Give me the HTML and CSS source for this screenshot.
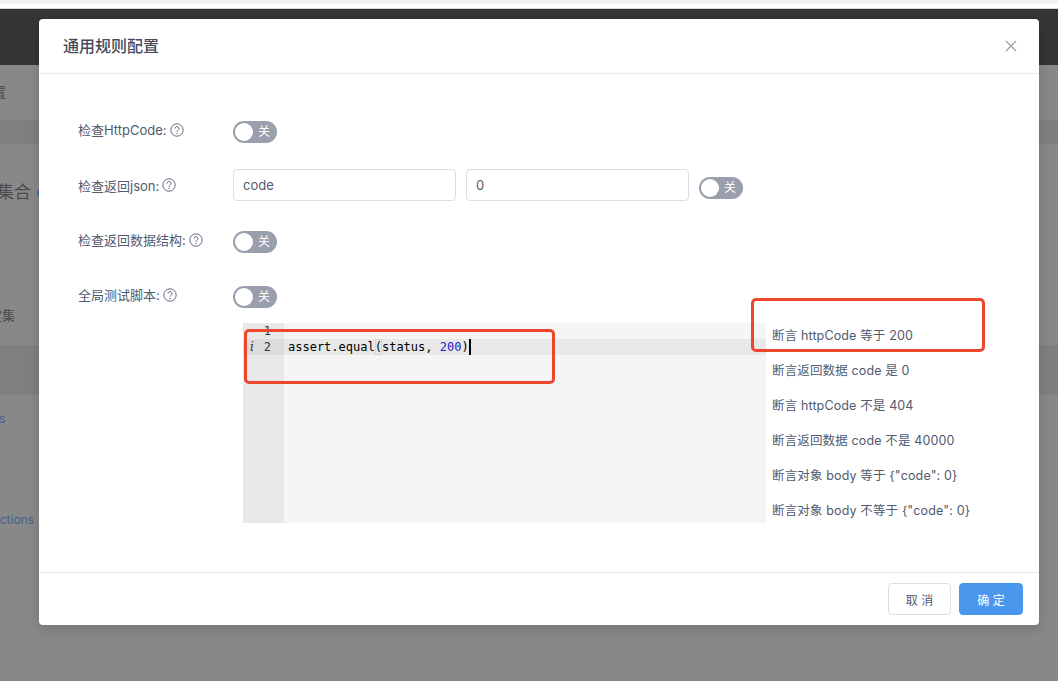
FILE: index.html
```html
<!DOCTYPE html>
<html lang="zh">
<head>
<meta charset="utf-8">
<title>通用规则配置</title>
<link rel="stylesheet" href="styles.css">
</head>
<body>
<div class="page">
  <div class="strip"></div>
  <div class="gap-white"></div>
  <div class="topbar"></div>
  <div class="sec sec-a"><span class="clip-a">设置</span></div>
  <div class="band band-a"></div>
  <div class="sec sec-b"><span class="clip-b">集合</span><i class="dot"></i></div>
  <div class="sec sec-c"><span class="clip-c">定集</span></div>
  <div class="band band-b"></div>
  <div class="sec sec-d"><span class="clip-d">s</span></div>
  <div class="sec sec-e"><span class="clip-e">actions</span></div>
</div>

<div class="modal">
  <header class="modal-head">
    <h2 class="modal-title">通用规则配置</h2>
    <svg class="close" viewBox="0 0 12 12" width="12" height="12"><path d="M1 1l10 10M11 1L1 11" stroke="#999ba8" stroke-width="1.1" fill="none"/></svg>
  </header>

  <div class="modal-body">
    <div class="row row-1">
      <label class="label label-up">检查HttpCode:<svg class="help" viewBox="0 0 14 14" width="14" height="14"><circle cx="7" cy="7" r="6.2" fill="none" stroke="#515a6e" stroke-width=".9"/><path d="M5 5.6a2 2 0 1 1 3 1.7c-.7.4-1 .8-1 1.4" fill="none" stroke="#515a6e" stroke-width=".9"/><circle cx="7" cy="10.4" r=".6" fill="#515a6e"/></svg></label>
      <span class="switch"><i class="knob"></i><span class="switch-text">关</span></span>
    </div>
    <div class="row row-2">
      <label class="label">检查返回json:<svg class="help" viewBox="0 0 14 14" width="14" height="14"><circle cx="7" cy="7" r="6.2" fill="none" stroke="#515a6e" stroke-width=".9"/><path d="M5 5.6a2 2 0 1 1 3 1.7c-.7.4-1 .8-1 1.4" fill="none" stroke="#515a6e" stroke-width=".9"/><circle cx="7" cy="10.4" r=".6" fill="#515a6e"/></svg></label>
      <input class="input" value="code">
      <input class="input input-second" value="0">
      <span class="switch switch-low"><i class="knob"></i><span class="switch-text">关</span></span>
    </div>
    <div class="row row-3">
      <label class="label label-up">检查返回数据结构:<svg class="help" viewBox="0 0 14 14" width="14" height="14"><circle cx="7" cy="7" r="6.2" fill="none" stroke="#515a6e" stroke-width=".9"/><path d="M5 5.6a2 2 0 1 1 3 1.7c-.7.4-1 .8-1 1.4" fill="none" stroke="#515a6e" stroke-width=".9"/><circle cx="7" cy="10.4" r=".6" fill="#515a6e"/></svg></label>
      <span class="switch"><i class="knob"></i><span class="switch-text">关</span></span>
    </div>
    <div class="row row-4">
      <label class="label label-up">全局测试脚本:<svg class="help" viewBox="0 0 14 14" width="14" height="14"><circle cx="7" cy="7" r="6.2" fill="none" stroke="#515a6e" stroke-width=".9"/><path d="M5 5.6a2 2 0 1 1 3 1.7c-.7.4-1 .8-1 1.4" fill="none" stroke="#515a6e" stroke-width=".9"/><circle cx="7" cy="10.4" r=".6" fill="#515a6e"/></svg></label>
      <span class="switch"><i class="knob"></i><span class="switch-text">关</span></span>
    </div>
    <div class="script-row">
      <div class="editor">
        <div class="gutter">
          <div class="gline">1</div>
          <div class="gline gline-active"><i class="info">i</i>2</div>
        </div>
        <div class="code">
          <div class="cline"></div>
          <div class="cline cline-active">assert.equal<span class="paren">(</span>status, <span class="num">200</span>)<span class="cursor"></span></div>
        </div>
      </div>
      <ul class="snippets">
        <li>断言 httpCode 等于 200</li>
        <li>断言返回数据 code 是 0</li>
        <li>断言 httpCode 不是 404</li>
        <li>断言返回数据 code 不是 40000</li>
        <li>断言对象 body 等于 {"code": 0}</li>
        <li>断言对象 body 不等于 {"code": 0}</li>
      </ul>
    </div>
  </div>

  <footer class="modal-foot">
    <button class="btn">取 消</button>
    <button class="btn btn-primary">确 定</button>
  </footer>

  <div class="mark mark-code"></div>
  <div class="mark mark-list"></div>
</div>
</body>
</html>
```
FILE: styles.css
```css
* { box-sizing: border-box; }
html, body { margin: 0; padding: 0; height: 100%; overflow: hidden; }
body { font-family: Inter, "Noto Sans CJK SC", sans-serif; background: #888; }

.page { display: flex; flex-direction: column; height: 681px; overflow: hidden; background: #888; color: #4a4a4e; }
.strip { height: 4px; background: #f0f1f3; }
.gap-white { height: 5px; background: #fff; border-bottom: 1px solid #d8d8d8; }
.topbar { height: 56px; background: #343537; }
.sec { overflow: hidden; white-space: nowrap; }
.sec-a { height: 55px; font-size: 13px; line-height: 54px; }
.clip-a { margin-left: -20px; }
.band { background: #7f7f7f; }
.band-a { height: 24px; }
.sec-b { height: 96px; padding-top: 34px; font-size: 17px; line-height: 28px; }
.clip-b { margin-left: -3px; }
.dot { display: inline-block; width: 12px; height: 12px; margin-left: 6px; border-radius: 50%; background: #3f6ea8; vertical-align: -1px; }
.sec-c { height: 105px; padding-top: 57px; font-size: 13px; line-height: 36px; }
.clip-c { margin-left: -11px; }
.band-b { height: 50px; }
.sec-d { height: 100px; padding-top: 14px; font-size: 12px; line-height: 20px; color: #3f628f; }
.clip-d { margin-left: -1px; }
.sec-e { height: 100px; padding-top: 15px; font-size: 12px; line-height: 20px; color: #3f628f; }
.clip-e { margin-left: -7px; }

.modal { position: absolute; left: 39px; top: 19px; width: 1000px; height: 606px; display: flex; flex-direction: column; background: #fff; border-radius: 4px; box-shadow: 0 4px 12px rgba(0,0,0,.15); color: #515a6e; font-size: 13px; }
.modal-head { display: flex; align-items: center; justify-content: space-between; height: 55px; padding: 0 22px 2px 24px; border-bottom: 1px solid #e8eaec; }
.modal-title { margin: 0; font-size: 16px; font-weight: 500; color: #464c5b; }
.close { display: block; margin-top: 2px; }
.modal-body { flex: 1; padding: 42px 0 0 39px; }
.row { display: flex; height: 32px; align-items: flex-start; }
.row-2 { margin-top: 21px; }
.row-3 { margin-top: 25px; }
.row-4 { margin-top: 23px; }
.label { display: flex; align-items: center; width: 155px; height: 32px; flex: none; }
.label-up { height: 27px; }
.help { margin-left: 3px; flex: none; }
.switch { position: relative; display: inline-block; width: 44px; height: 22px; flex: none; margin-top: 5px; border-radius: 11px; background: #9a9fae; }
.switch-low { margin-top: 8px; margin-left: 10px; }
.knob { position: absolute; left: 2px; top: 2px; width: 18px; height: 18px; border-radius: 50%; background: #fff; }
.switch-text { position: absolute; left: 21px; top: 0; width: 20px; text-align: center; font-size: 12px; line-height: 22px; color: #fff; }
.input { width: 223px; height: 32px; padding: 0 9px; border: 1px solid #dcdee2; border-radius: 4px; font: inherit; color: #515a6e; outline: none; }
.input-second { margin-left: 10px; }

.script-row { display: flex; align-items: flex-start; margin-top: 5px; padding-left: 165px; }
.editor { display: flex; width: 523px; height: 200px; margin-top: 5px; background: #f5f5f5; font-family: "DejaVu Sans Mono", monospace; font-size: 12px; line-height: 16px; color: #000; }
.gutter { width: 41px; flex: none; background: #e8e8e8; color: #333; }
.gline { position: relative; height: 16px; padding-right: 13px; text-align: right; }
.gline-active { background: #dcdcdc; }
.info { position: absolute; left: 7px; top: 0; font-family: "DejaVu Serif", serif; font-size: 12px; font-style: italic; }
.code { flex: 1; }
.cline { height: 16px; padding-left: 4px; }
.cline-active { display: flex; background: #e8e8e8; white-space: pre; }
.paren { box-shadow: inset 0 0 0 1px #d4d4d4; }
.num { color: #2222cc; }
.cursor { width: 2px; height: 16px; background: #000; }
.snippets { list-style: none; margin: 0 0 0 6px; padding: 0; font-size: 12.5px; letter-spacing: .14px; }
.snippets li { height: 35px; line-height: 35px; white-space: nowrap; }

.modal-foot { display: flex; justify-content: flex-end; align-items: flex-start; gap: 8px; height: 53px; padding: 10px 16px 0 0; border-top: 1px solid #e8eaec; }
.btn { width: 63px; height: 32px; padding: 0; border: 1px solid #dcdee2; border-radius: 4px; background: #fff; color: #515a6e; font: inherit; font-size: 12px; }
.btn-primary { width: 64px; border-color: #4a97ee; background: #4a97ee; color: #fff; }

.mark { position: absolute; border: 3px solid #ea472c; border-radius: 5px; }
.mark-code { left: 205px; top: 310px; width: 311px; height: 55px; }
.mark-list { left: 712px; top: 279px; width: 234px; height: 54px; }
```
